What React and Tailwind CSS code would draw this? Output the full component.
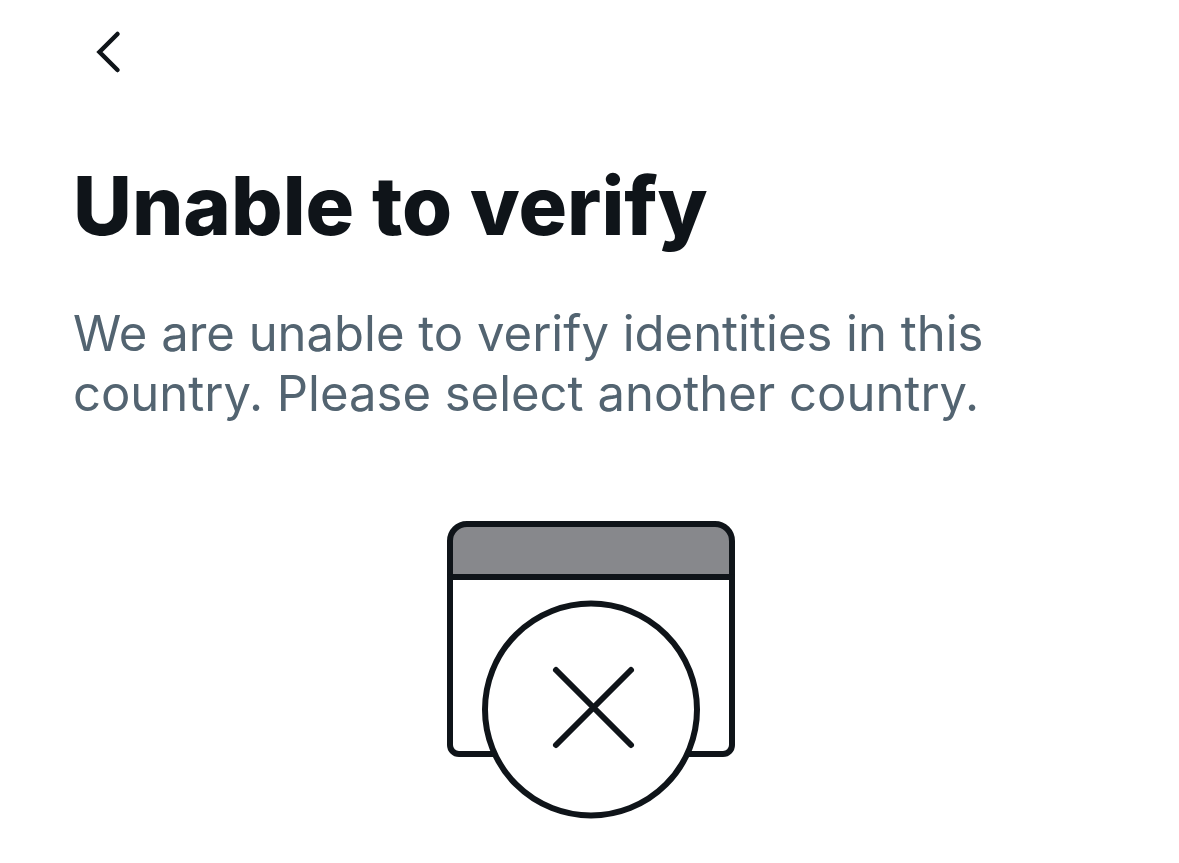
export default function App() {
  return (
    <main className="min-h-screen bg-white px-[73px] pt-5 font-['Inter',sans-serif] text-[#0f1419]">
      <header>
        <button type="button" aria-label="Back" className="block px-4 py-2">
          <svg width="40" height="48" viewBox="0 0 40 48" fill="none" stroke="#0f1419" strokeWidth="4.500" strokeLinecap="round" strokeLinejoin="miter">
            <path d="M28.500 6 10.500 24 28.500 42" />
          </svg>
        </button>
      </header>
      <h1 className="mt-[74px] text-[81px] leading-[96px] font-extrabold">Unable to verify</h1>
      <p className="mt-[50px] max-w-[960px] text-[49px] leading-[60px] text-[#536471]">
        We are unable to verify identities in this country. Please select another country.
      </p>
      <svg className="mx-auto mt-24 block" width="290" height="300" viewBox="445 520 290 300" fill="none" stroke="#0f1419" strokeWidth="6" strokeLinecap="round">
        <path d="M450 577V541a17 17 0 0 1 17-17H715a17 17 0 0 1 17 17V577Z" fill="#87888c" />
        <path d="M450 577V745a9 9 0 0 0 9 9H723a9 9 0 0 0 9-9V577" />
        <circle cx="591" cy="709.500" r="106" fill="white" />
        <path d="M556 670 631 745M631 670 556 745" />
      </svg>
    </main>
  );
}
